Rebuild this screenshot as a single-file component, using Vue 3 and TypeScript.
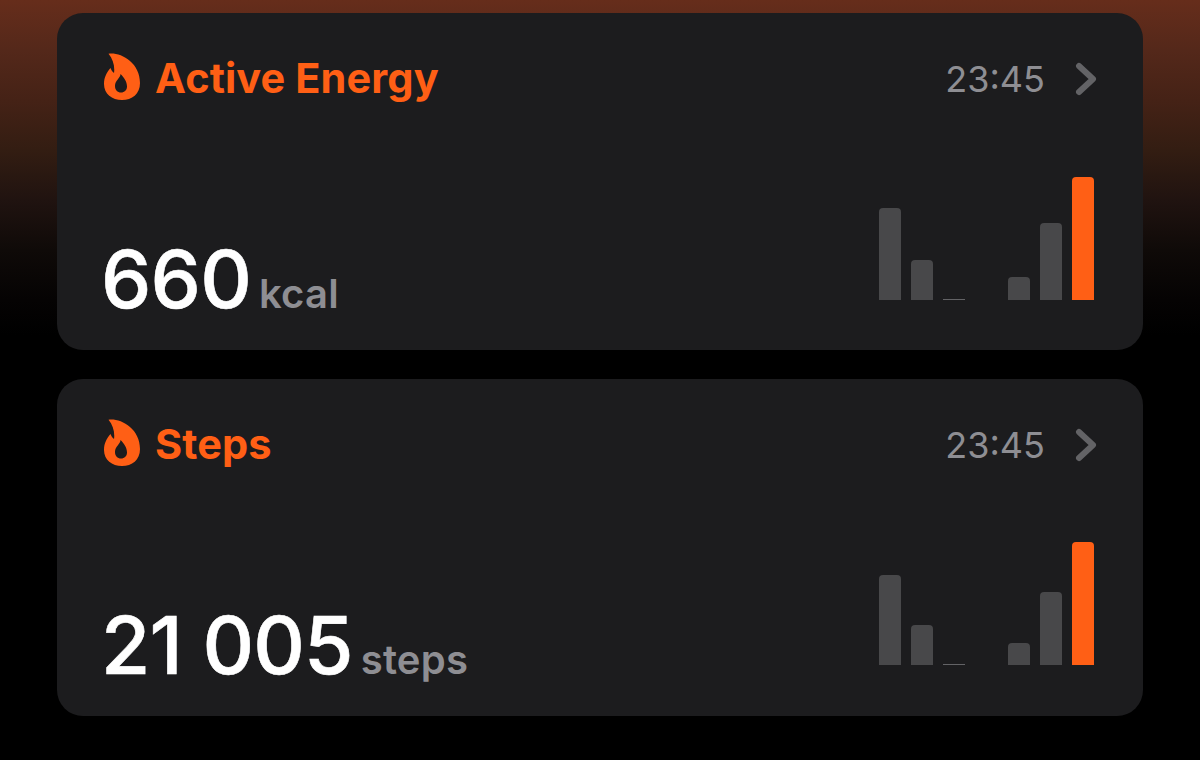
<script setup lang="ts">
interface Card {
  title: string
  value: string
  unit: string
  bars: number[]
}

const cards: Card[] = [
  { title: 'Active Energy', value: '660', unit: 'kcal', bars: [92, 40, 1, 23, 77, 123] },
  { title: 'Steps', value: '21 005', unit: 'steps', bars: [90, 40, 1, 22, 73, 123] },
]
</script>

<template>
  <main class="page">
    <section v-for="card in cards" :key="card.title" class="card">
      <header class="head">
        <div class="title">
          <svg class="flame" viewBox="0 0 36 47" aria-hidden="true">
            <path
              fill-rule="evenodd"
              d="M4.500.8C16-1 36 9 36 30 36 41 28 47 18 47 8 47 0 41 0 31 0 24 3 19 6.500 15 7.300 17 8.500 19 10 20 11 13.500 9 6 4.500.8ZM16.500 21C16.500 25 11 27.500 11 33 11 37 13.500 39.500 17 39.500 20.500 39.500 23 37 23 33.500 23 28.500 20 24.500 16.500 21Z"
            />
          </svg>
          <span class="label">{{ card.title }}</span>
        </div>
        <div class="meta">
          <span>23:45</span>
          <svg class="chevron" viewBox="0 0 24 34" aria-hidden="true">
            <path d="M5 4 19 17 5 30" />
          </svg>
        </div>
      </header>
      <div class="foot">
        <div class="reading">
          <span class="value">{{ card.value }}</span>
          <span class="unit">{{ card.unit }}</span>
        </div>
        <div class="chart">
          <span
            v-for="(h, i) in card.bars"
            :key="i"
            class="bar"
            :class="{ gap: i === 3, live: i === 5, flat: h === 1 }"
            :style="{ height: h + 'px' }"
          />
        </div>
      </div>
    </section>
  </main>
</template>

<style>
body {
  background: #000;
}
</style>

<style scoped>
.page {
  box-sizing: border-box;
  width: 1200px;
  height: 760px;
  overflow: hidden;
  padding: 13px 57px 0;
  display: flex;
  flex-direction: column;
  gap: 29px;
  background: linear-gradient(180deg, #662d1b 0, #54281a 50px, #452216 100px, #331d12 150px, #201310 200px, #0f0a08 250px, #050303 300px, #000 335px);
  font-family: Inter, "Liberation Sans", sans-serif;
}
.card {
  box-sizing: border-box;
  height: 337px;
  flex: none;
  padding: 40px 49px 50px 47px;
  border-radius: 26px;
  background: #1c1c1e;
  display: flex;
  flex-direction: column;
  justify-content: space-between;
}
.head {
  display: flex;
  justify-content: space-between;
  align-items: center;
  height: 47px;
}
.title {
  display: flex;
  align-items: center;
  gap: 15px;
  color: #ff5f15;
  font-size: 41.500px;
  font-weight: 700;
  letter-spacing: 0.1px;
  line-height: 47px;
}
.label {
  padding-top: 4px;
}
.flame {
  width: 36px;
  height: 47px;
  fill: #ff5f15;
  flex: none;
}
.meta {
  display: flex;
  align-items: center;
  gap: 29px;
  margin-right: -4px;
  padding-top: 5px;
  color: #8e8e93;
  font-size: 36px;
}
.chevron {
  width: 24px;
  height: 34px;
  fill: none;
  stroke: #636366;
  stroke-width: 6;
  stroke-linecap: round;
  stroke-linejoin: round;
}
.foot {
  display: flex;
  justify-content: space-between;
  align-items: flex-end;
}
.reading {
  display: flex;
  align-items: baseline;
  gap: 8px;
  line-height: 1;
  margin-left: -3px;
  margin-bottom: -19px;
}
.value {
  color: #fff;
  font-size: 80px;
  font-weight: 500;
  letter-spacing: -0.8px;
  -webkit-text-stroke: 0.6px #fff;
}
.unit {
  color: #8e8e93;
  font-size: 40px;
  font-weight: 600;
  letter-spacing: 0.2px;
}
.chart {
  display: flex;
  align-items: flex-end;
  gap: 9.500px;
}
.card:last-child .chart {
  margin-bottom: 1px;
}
.bar {
  width: 22.500px;
  border-radius: 4px 4px 0 0;
  background: #48484a;
}
.bar.flat {
  background: #636366;
  border-radius: 0;
}
.bar.gap {
  margin-left: 33px;
}
.bar.live {
  background: #ff5f15;
}
</style>
